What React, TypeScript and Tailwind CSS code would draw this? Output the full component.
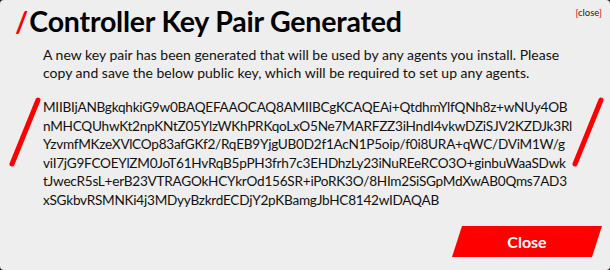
import React from "react";

const keyLines = [
  "MIIBIjANBgkqhkiG9w0BAQEFAAOCAQ8AMIIBCgKCAQEAi+QtdhmYlfQNh8z+wNUy4OB",
  "nMHCQUhwKt2npKNtZ05YlzWKhPRKqoLxO5Ne7MARFZZ3iHndI4vkwDZiSJV2KZDJk3Rl",
  "YzvmfMKzeXVlCOp83afGKf2/RqEB9YjgUB0D2f1AcN1P5oip/f0i8URA+qWC/DViM1W/g",
  "viI7jG9FCOEYlZM0JoT61HvRqB5pPH3frh7c3EHDhzLy23iNuREeRCO3O+ginbuWaaSDwk",
  "tJwecR5sL+erB23VTRAGOkHCYkrOd156SR+iPoRK3O/8HIm2SiSGpMdXwAB0Qms7AD3",
  "xSGkbvRSMNKi4j3MDyyBzkrdECDjY2pKBamgJbHC8142wIDAQAB",
];

function Slash() {
  return (
    <svg width="32" height="70" viewBox="0 0 32 70" className="shrink-0">
      <line x1="29" y1="3" x2="3" y2="67" stroke="#ff0000" strokeWidth="5" strokeLinecap="round" />
    </svg>
  );
}

export default function App() {
  return (
    <div className="w-[610px] h-[270px] bg-[#222]" style={{ fontFamily: "Lato, 'Open Sans', sans-serif" }}>
      <div className="relative w-full h-full rounded-[4px] bg-[#eeeeee] flex flex-col">
        <div className="absolute right-[8px] top-[6px] text-[9.5px] leading-[13px] text-[#222]">
          <span className="text-[#ff0000]">[</span>close<span className="text-[#ff0000]">]</span>
        </div>
        <div className="flex items-center pl-[15px] pt-[4px] h-[38px]">
          <span className="text-[#ff0000] font-bold text-[28.5px] leading-[34px] mr-[1px]">/</span>
          <h1 className="font-bold text-[28.5px] leading-[34px] text-black tracking-[-0.2px]">Controller Key Pair Generated</h1>
        </div>
        <p className="pl-[43px] pr-[40px] text-[14px] leading-[18px] text-[#111] mt-[8px]">
          A new key pair has been generated that will be used by any agents you install. Please
          <br />
          copy and save the below public key, which will be required to set up any agents.
        </p>
        <div className="flex items-start mt-[16px]">
          <div className="w-[43px] pl-[9px] -mt-[1px]">
            <Slash />
          </div>
          <div className="text-[13.6px] leading-[18.5px] text-[#111] w-[529px] tracking-[-0.25px] whitespace-nowrap">
            {keyLines.map((l) => (
              <div key={l}>{l}</div>
            ))}
          </div>
          <div className="-mt-[1px]">
            <Slash />
          </div>
        </div>
        <div className="flex justify-end pr-[8px] mt-auto mb-[13px]">
          <button
            className="w-[150px] h-[31px] bg-[#ff0000] text-white font-bold text-[16px]"
            style={{ clipPath: "polygon(10px 0, 100% 0, 140px 100%, 0 100%)" }}
          >
            Close
          </button>
        </div>
      </div>
    </div>
  );
}
